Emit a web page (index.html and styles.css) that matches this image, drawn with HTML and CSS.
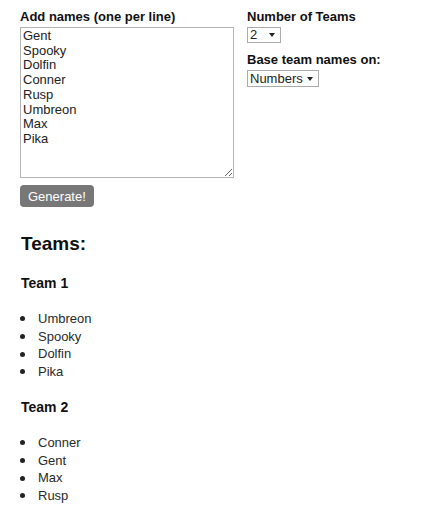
FILE: index.html
```html
<!DOCTYPE html>
<html lang="en">
<head>
  <meta charset="UTF-8">
  <meta name="viewport" content="width=device-width, initial-scale=1.0">
  <title>Team Generator</title>
  <link rel="stylesheet" href="styles.css">
</head>
<body>

  <div class="controls">
    <div class="names-col">
      <label for="names">Add names (one per line)</label>
      <textarea id="names">Gent
Spooky
Dolfin
Conner
Rusp
Umbreon
Max
Pika</textarea>
      <button id="generate">Generate!</button>
    </div>

    <div class="options-col">
      <label for="team-count">Number of Teams</label>
      <span class="select-wrap">
        <select id="team-count" class="count-select">
          <option>2</option>
          <option>3</option>
          <option>4</option>
        </select>
      </span>

      <label for="team-base" class="second">Base team names on:</label>
      <span class="select-wrap">
        <select id="team-base" class="base-select">
          <option>Numbers</option>
          <option>Colors</option>
        </select>
      </span>
    </div>
  </div>

  <div class="results">
    <h2>Teams:</h2>

    <h3>Team 1</h3>
    <ul>
      <li>Umbreon</li>
      <li>Spooky</li>
      <li>Dolfin</li>
      <li>Pika</li>
    </ul>

    <h3>Team 2</h3>
    <ul>
      <li>Conner</li>
      <li>Gent</li>
      <li>Max</li>
      <li>Rusp</li>
    </ul>
  </div>

</body>
</html>
```

FILE: styles.css
```css
body {
  font-family: 'Liberation Sans', Arial, sans-serif;
  font-size: 13px;
  color: #222;
  margin: 0;
  padding: 0 20px;
  background-color: #FFF;
}

.controls {
  display: flex;
  gap: 13px;
  padding-top: 9px;
}

.names-col {
  width: 214px;
  display: flex;
  flex-direction: column;
  align-items: flex-start;
}

.options-col {
  display: flex;
  flex-direction: column;
  align-items: flex-start;
}

label {
  display: block;
  font-weight: bold;
  font-size: 13px;
  line-height: 15px;
  color: #111;
}

label.second {
  margin-top: 9px;
}

textarea {
  box-sizing: border-box;
  width: 214px;
  height: 151px;
  margin: 3px 0 0;
  padding: 1px 2px;
  border: 1px solid #B4B4B4;
  font-family: 'Liberation Sans', Arial, sans-serif;
  font-size: 13px;
  line-height: 14.7px;
  color: #222;
  outline: none;
}

button {
  margin-top: 7px;
  height: 22px;
  padding: 0 8px;
  background-color: #777;
  color: #FFF;
  border: none;
  border-radius: 4px;
  font-family: 'Liberation Sans', Arial, sans-serif;
  font-size: 13px;
  cursor: pointer;
}

.select-wrap {
  position: relative;
  display: inline-block;
  margin-top: 3px;
}

.select-wrap::after {
  content: '';
  position: absolute;
  right: 6px;
  top: 50%;
  margin-top: -2px;
  border-left: 3px solid transparent;
  border-right: 3px solid transparent;
  border-top: 4px solid #222;
  pointer-events: none;
}

select {
  appearance: none;
  -webkit-appearance: none;
  box-sizing: border-box;
  display: block;
  margin: 0;
  padding: 0 0 0 2px;
  border: 1px solid #ABABAB;
  border-radius: 0;
  background: #FFF;
  font-family: 'Liberation Sans', Arial, sans-serif;
  font-size: 13px;
  color: #222;
}

.count-select {
  width: 34px;
  height: 16px;
  line-height: 14px;
}

.base-select {
  width: 72px;
  height: 17px;
  line-height: 15px;
}

.results h2 {
  font-size: 19px;
  line-height: 24px;
  margin: 25px 0 0 1px;
  color: #111;
}

.results h3 {
  font-size: 14px;
  line-height: 18px;
  margin: 18px 0 0 1px;
  color: #111;
}

.results ul {
  list-style: none;
  margin: 18px 0 0;
  padding: 0;
}

.results li {
  display: flex;
  align-items: center;
  line-height: 17.7px;
  color: #2a2a2a;
}

.results li::before {
  content: '';
  width: 5px;
  height: 5px;
  border-radius: 50%;
  background-color: #222;
  margin-right: 13px;
}

.results ul + h3 {
  margin-top: 17px;
}
```
